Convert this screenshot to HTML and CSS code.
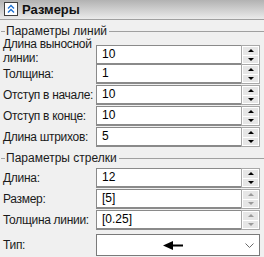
FILE: index.html
```html
<!DOCTYPE html>
<html lang="ru">
<head>
  <meta charset="UTF-8">
  <title>Размеры</title>
  <link rel="stylesheet" href="styles.css">
</head>
<body>
  <div class="panel">
    <div class="header">
      <span class="collapse">
        <svg width="10" height="10" viewBox="0 0 10 10"><path d="M2 4.5 L5 1.5 L8 4.5 M2 8.5 L5 5.5 L8 8.5" fill="none" stroke="#1c6fd0" stroke-width="1.4"/></svg>
      </span>
      <span class="title">Размеры</span>
    </div>

    <div class="legend"><span>Параметры линий</span></div>
    <div class="rows">
      <div class="row tall">
        <label>Длина выносной линии:</label>
        <div class="field"><div class="input">10</div><div class="spin"><span class="up"></span><span class="down"></span></div></div>
      </div>
      <div class="row">
        <label>Толщина:</label>
        <div class="field"><div class="input">1</div><div class="spin"><span class="up"></span><span class="down"></span></div></div>
      </div>
      <div class="row">
        <label>Отступ в начале:</label>
        <div class="field"><div class="input">10</div><div class="spin"><span class="up"></span><span class="down"></span></div></div>
      </div>
      <div class="row">
        <label>Отступ в конце:</label>
        <div class="field"><div class="input">10</div><div class="spin"><span class="up"></span><span class="down"></span></div></div>
      </div>
      <div class="row">
        <label>Длина штрихов:</label>
        <div class="field"><div class="input">5</div><div class="spin"><span class="up"></span><span class="down"></span></div></div>
      </div>
    </div>

    <div class="legend second"><span>Параметры стрелки</span></div>
    <div class="rows">
      <div class="row">
        <label>Длина:</label>
        <div class="field"><div class="input">12</div><div class="spin"><span class="up"></span><span class="down"></span></div></div>
      </div>
      <div class="row">
        <label>Размер:</label>
        <div class="field"><div class="input">[5]</div><div class="spin off"><span class="up"></span><span class="down"></span></div></div>
      </div>
      <div class="row">
        <label>Толщина линии:</label>
        <div class="field"><div class="input">[0.25]</div><div class="spin off"><span class="up"></span><span class="down"></span></div></div>
      </div>
      <div class="row combo-row">
        <label>Тип:</label>
        <div class="combo">
          <svg class="arrow" width="20" height="9" viewBox="0 0 20 9"><path d="M0 4.5 L10 0 L10 9 Z" fill="#000"/><rect x="9" y="3.5" width="11" height="2" fill="#000"/></svg>
          <svg class="chev" width="9" height="5" viewBox="0 0 9 5"><path d="M0.5 0.5 L4.5 4.5 L8.5 0.5" fill="none" stroke="#6a6a6a" stroke-width="1"/></svg>
        </div>
      </div>
    </div>
  </div>
</body>
</html>
```

FILE: styles.css
```css
body {
  margin: 0;
  font-family: "Liberation Sans", Arial, sans-serif;
  font-size: 11.5px;
  color: #000;
  background: #f0f0f0;
}
.panel {
  width: 264px;
  height: 257px;
  background: #f0f0f0;
  overflow: hidden;
}
.header {
  height: 19px;
  border-bottom: 1px solid #a0a0a0;
  background: linear-gradient(#b2b2b2, #ebebeb);
  display: flex;
  align-items: center;
  padding-left: 4px;
}
.collapse {
  width: 12px;
  height: 12px;
  border: 1px solid #404040;
  background: #fff;
  display: flex;
  align-items: center;
  justify-content: center;
  margin-top: -1px;
}
.title {
  font-weight: bold;
  font-size: 13px;
  margin-left: 4px;
  color: #111;
}
.legend {
  display: flex;
  align-items: center;
  height: 14px;
  margin-top: 4px;
  padding-left: 1px;
  color: #1a1a1a;
  font-size: 12px;
}
.legend::before {
  content: "";
  width: 4px;
  border-top: 1px solid #a0a0a0;
}
.legend::after {
  content: "";
  flex: 1;
  border-top: 1px solid #a0a0a0;
  margin-left: 2px;
}
.legend span {
  margin-left: 1px;
}
.legend.second {
  margin-top: 4px;
  margin-bottom: 3px;
}
.rows {
  display: flex;
  flex-direction: column;
  gap: 1px;
  padding: 0 4px 0 3px;
}
.row {
  display: grid;
  grid-template-columns: 93px 1fr;
  align-items: center;
  height: 20px;
}
.row label {
  line-height: 14px;
  color: #1a1a1a;
  white-space: nowrap;
  font-size: 12px;
  letter-spacing: -0.3px;
}
.row.tall {
  height: 25px;
  align-items: end;
}
.row.tall label {
  align-self: start;
  margin-top: -1px;
  white-space: normal;
}
.field {
  display: flex;
  height: 20px;
}
.input {
  flex: 1;
  background: #fff;
  border: 1px solid #8a8a8a;
  border-bottom-width: 2px;
  border-right: none;
  padding-left: 5px;
  line-height: 17px;
  font-size: 12px;
}
.spin {
  width: 15px;
  border: 1px solid #a8a8a8;
  background: #fff;
  display: flex;
  flex-direction: column;
  gap: 1px;
  padding: 1px;
}
.spin span {
  flex: 1;
  background: #e6e6e6;
  display: flex;
  align-items: center;
  justify-content: center;
}
.spin span::after {
  content: "";
  border-left: 3px solid transparent;
  border-right: 3px solid transparent;
}
.spin .up::after {
  border-bottom: 3px solid #000;
}
.spin .down::after {
  border-top: 3px solid #000;
}
.spin.off .up::after {
  border-bottom-color: #9a9a9a;
}
.spin.off .down::after {
  border-top-color: #9a9a9a;
}
.combo-row {
  margin-top: 3px;
}
.combo {
  height: 20px;
  background: #fff;
  border: 1px solid #7a7a7a;
  display: flex;
  align-items: center;
}
.arrow {
  margin-left: 66px;
}
.chev {
  margin-left: auto;
  margin-right: 5px;
}
```
